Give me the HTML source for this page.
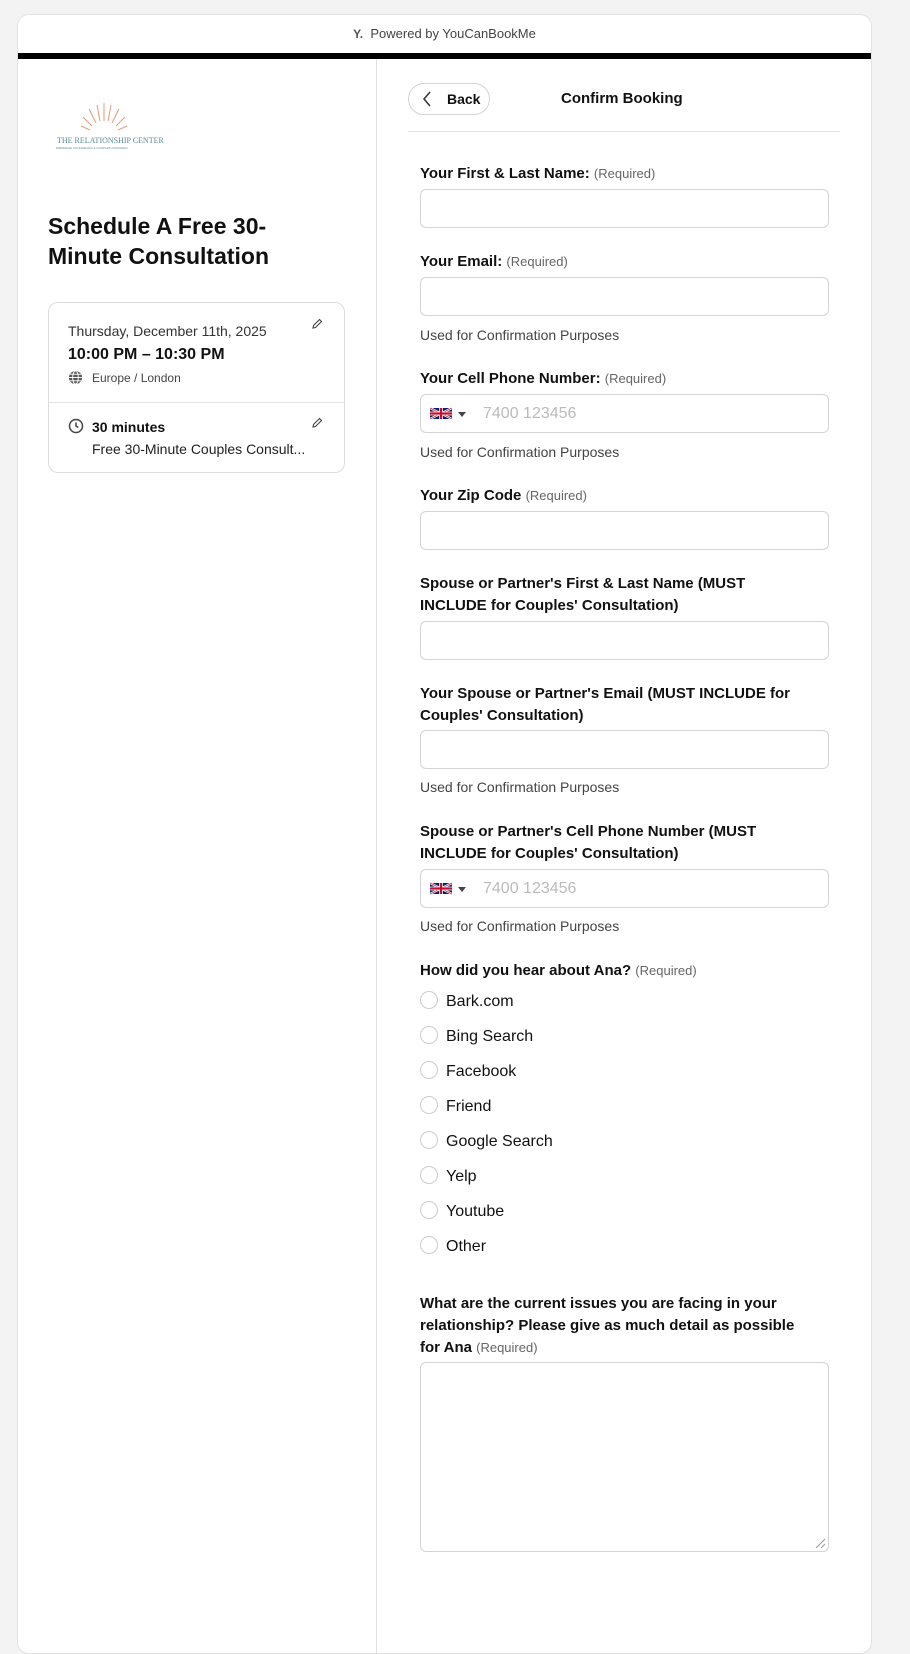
<!DOCTYPE html>
<html><head><style>
*{box-sizing:border-box;margin:0;padding:0}
body{width:910px;height:1612px;background:#f3f3f3;font-family:"Liberation Sans",sans-serif;color:#111;position:relative;overflow:hidden}
.card{position:absolute;left:17px;top:14px;width:855px;height:1640px;background:#fff;border:1px solid #e2e2e2;border-radius:12px;overflow:hidden}
.hdr{height:38px;text-align:center;font-size:13px;color:#444;line-height:38px}
.bar{height:6px;background:#000}
.div{position:absolute;left:358px;top:44px;bottom:0;width:1px;background:#e0e0e0}
.a{position:absolute}
.lbl{position:absolute;left:402px;font-size:15px;font-weight:bold;line-height:22px;width:430px;white-space:nowrap}
.lbl span{font-weight:normal;font-size:13px;color:#666}
.inp{position:absolute;left:402px;width:409px;height:39px;border:1px solid #d4d4d4;border-radius:6px}
.hint{position:absolute;left:402px;font-size:14px;color:#444}
.rad{position:absolute;left:402px;font-size:16px;color:#111;line-height:18px}
.rad i{display:inline-block;width:18px;height:18px;border:1px solid #ccc;border-radius:50%;vertical-align:middle;margin-right:8px;margin-top:-3px}
.ph{position:absolute;left:62px;top:10px;font-size:16px;color:#bbb}
.flag{position:absolute;left:9px;top:11px;width:22px;height:15px}
.caret{position:absolute;left:37px;top:17px;border:4px solid transparent;border-top:5px solid #444}
</style></head><body>
<div class="card">
<div class="hdr"><b style="font-size:12px;color:#555">Y.</b>&nbsp; Powered by YouCanBookMe</div>
<div class="bar"></div>
<div class="div"></div>
<svg class="a" style="left:36px;top:86px" width="110" height="50" viewBox="0 0 110 50">
<g stroke="#e29a7a" stroke-width="1">
<line x1="50" y1="20" x2="50" y2="2"/><line x1="46" y1="20" x2="43" y2="4"/><line x1="54" y1="20" x2="57" y2="4"/>
<line x1="42" y1="22" x2="35" y2="8"/><line x1="58" y1="22" x2="65" y2="8"/><line x1="38" y1="25" x2="29" y2="16"/><line x1="62" y1="25" x2="71" y2="16"/>
<line x1="36" y1="29" x2="27" y2="25"/><line x1="64" y1="29" x2="73" y2="25"/></g>
<text x="3" y="42" font-size="8" fill="#5a8a96" font-family="Liberation Serif">THE RELATIONSHIP CENTER</text>
<text x="2" y="48" font-size="3" fill="#5a8a96">MARRIAGE COUNSELING &amp; COUPLES COACHING</text>
</svg>
<div class="a" style="left:30px;top:196px;font-size:23px;font-weight:bold;line-height:30px;width:290px">Schedule A Free 30-Minute Consultation</div>
<div class="a" style="left:30px;top:287px;width:297px;height:171px;border:1px solid #ddd;border-radius:10px">
<div class="a" style="left:19px;top:20px;font-size:14px;color:#333">Thursday, December 11th, 2025</div>
<div class="a" style="left:19px;top:43px;font-size:16px;font-weight:bold">10:00 PM – 10:30 PM</div>
<svg class="a" style="left:19px;top:67px" width="15" height="15" viewBox="0 0 16 16"><circle cx="8" cy="8" r="7" fill="#555"/><g stroke="#fff" stroke-width="1" fill="none"><ellipse cx="8" cy="8" rx="3" ry="7"/><line x1="1" y1="8" x2="15" y2="8"/><line x1="2" y1="4.5" x2="14" y2="4.5"/><line x1="2" y1="11.5" x2="14" y2="11.5"/></g></svg>
<div class="a" style="left:43px;top:68px;font-size:12px;color:#444">Europe / London</div>
<svg class="a" style="left:262px;top:15px" width="12" height="12" viewBox="0 0 12 12"><path d="M2 10 L2.5 7.5 L8.5 1.5 L10.5 3.5 L4.5 9.5 Z" fill="none" stroke="#444" stroke-width="1.1"/></svg>
<div class="a" style="left:0;top:99px;width:100%;height:1px;background:#e2e2e2"></div>
<svg class="a" style="left:19px;top:115px" width="16" height="16" viewBox="0 0 16 16"><circle cx="8" cy="8" r="6.5" fill="none" stroke="#444" stroke-width="1.5"/><path d="M8 4.5V8l2.3 1.5" fill="none" stroke="#444" stroke-width="1.5"/></svg>
<div class="a" style="left:43px;top:116px;font-size:14px;font-weight:bold">30 minutes</div>
<div class="a" style="left:43px;top:138px;font-size:14px;color:#222">Free 30-Minute Couples Consult...</div>
<svg class="a" style="left:262px;top:114px" width="12" height="12" viewBox="0 0 12 12"><path d="M2 10 L2.5 7.5 L8.5 1.5 L10.5 3.5 L4.5 9.5 Z" fill="none" stroke="#444" stroke-width="1.1"/></svg>
</div>
<div class="a" style="left:390px;top:68px;width:82px;height:32px;border:1px solid #d4d4d4;border-radius:16px;font-size:14px;font-weight:bold;line-height:30px;padding-left:38px">Back</div>
<svg class="a" style="left:404px;top:76px" width="10" height="16" viewBox="0 0 10 16"><path d="M8 1L2 8l6 7" fill="none" stroke="#333" stroke-width="1.5"/></svg>
<div class="a" style="left:543px;top:75px;font-size:15px;font-weight:bold">Confirm Booking</div>
<div class="a" style="left:390px;top:116px;width:432px;height:1px;background:#e0e0e0"></div>

<div class="lbl" style="top:148px">Your First &amp; Last Name: <span>(Required)</span></div>
<div class="inp" style="top:174px"></div>
<div class="lbl" style="top:236px">Your Email: <span>(Required)</span></div>
<div class="inp" style="top:262px"></div>
<div class="hint" style="top:312px">Used for Confirmation Purposes</div>
<div class="lbl" style="top:353px">Your Cell Phone Number: <span>(Required)</span></div>
<div class="inp" style="top:379px"><svg class="flag" viewBox="0 0 60 30"><rect width="60" height="30" fill="#012169"/><path d="M0 0L60 30M60 0L0 30" stroke="#fff" stroke-width="6"/><path d="M0 0L60 30M60 0L0 30" stroke="#C8102E" stroke-width="2"/><path d="M30 0V30M0 15H60" stroke="#fff" stroke-width="10"/><path d="M30 0V30M0 15H60" stroke="#C8102E" stroke-width="6"/></svg><div class="caret"></div><div class="ph">7400 123456</div></div>
<div class="hint" style="top:429px">Used for Confirmation Purposes</div>
<div class="lbl" style="top:470px">Your Zip Code <span>(Required)</span></div>
<div class="inp" style="top:496px"></div>
<div class="lbl" style="top:558px">Spouse or Partner's First &amp; Last Name (MUST<br>INCLUDE for Couples' Consultation)</div>
<div class="inp" style="top:606px"></div>
<div class="lbl" style="top:668px">Your Spouse or Partner's Email (MUST INCLUDE for<br>Couples' Consultation)</div>
<div class="inp" style="top:715px"></div>
<div class="hint" style="top:764px">Used for Confirmation Purposes</div>
<div class="lbl" style="top:806px">Spouse or Partner's Cell Phone Number (MUST<br>INCLUDE for Couples' Consultation)</div>
<div class="inp" style="top:854px"><svg class="flag" viewBox="0 0 60 30"><rect width="60" height="30" fill="#012169"/><path d="M0 0L60 30M60 0L0 30" stroke="#fff" stroke-width="6"/><path d="M0 0L60 30M60 0L0 30" stroke="#C8102E" stroke-width="2"/><path d="M30 0V30M0 15H60" stroke="#fff" stroke-width="10"/><path d="M30 0V30M0 15H60" stroke="#C8102E" stroke-width="6"/></svg><div class="caret"></div><div class="ph">7400 123456</div></div>
<div class="hint" style="top:903px">Used for Confirmation Purposes</div>
<div class="lbl" style="top:945px">How did you hear about Ana? <span>(Required)</span></div>
<div class="rad" style="top:978px"><i></i>Bark.com</div>
<div class="rad" style="top:1013px"><i></i>Bing Search</div>
<div class="rad" style="top:1048px"><i></i>Facebook</div>
<div class="rad" style="top:1083px"><i></i>Friend</div>
<div class="rad" style="top:1118px"><i></i>Google Search</div>
<div class="rad" style="top:1153px"><i></i>Yelp</div>
<div class="rad" style="top:1188px"><i></i>Youtube</div>
<div class="rad" style="top:1223px"><i></i>Other</div>
<div class="lbl" style="top:1278px">What are the current issues you are facing in your<br>relationship? Please give as much detail as possible<br>for Ana <span>(Required)</span></div>
<div class="inp" style="top:1347px;height:190px"><svg class="a" style="right:2px;bottom:2px" width="12" height="12" viewBox="0 0 12 12"><path d="M11 2L2 11M11 7L7 11" stroke="#999"/></svg></div>
</div>
</body></html>
